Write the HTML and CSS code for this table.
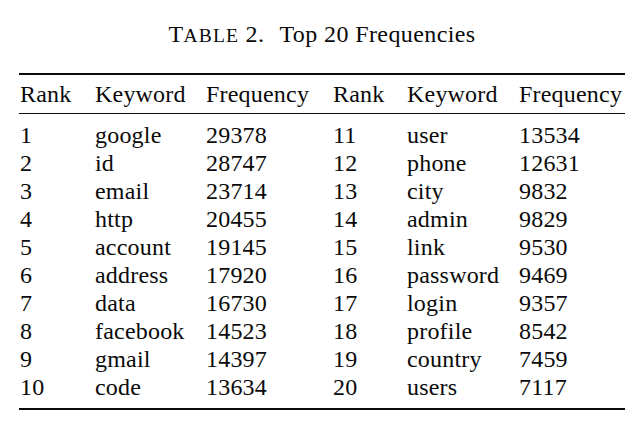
FILE: index.html
```html
<!DOCTYPE html>
<html lang="en">
<head>
<meta charset="utf-8">
<title>Table 2. Top 20 Frequencies</title>
<link rel="stylesheet" href="styles.css">
</head>
<body>
<div class="page">
  <div class="caption"><span class="label">T<span class="sc">ABLE</span> 2.</span>Top 20 Frequencies</div>
  <div class="table">
    <div class="head">
      <div class="row"><span>Rank</span><span>Keyword</span><span>Frequency</span><span>Rank</span><span>Keyword</span><span>Frequency</span></div>
    </div>
    <div class="body">
      <div class="row"><span>1</span><span>google</span><span>29378</span><span>11</span><span>user</span><span>13534</span></div>
      <div class="row"><span>2</span><span>id</span><span>28747</span><span>12</span><span>phone</span><span>12631</span></div>
      <div class="row"><span>3</span><span>email</span><span>23714</span><span>13</span><span>city</span><span>9832</span></div>
      <div class="row"><span>4</span><span>http</span><span>20455</span><span>14</span><span>admin</span><span>9829</span></div>
      <div class="row"><span>5</span><span>account</span><span>19145</span><span>15</span><span>link</span><span>9530</span></div>
      <div class="row"><span>6</span><span>address</span><span>17920</span><span>16</span><span>password</span><span>9469</span></div>
      <div class="row"><span>7</span><span>data</span><span>16730</span><span>17</span><span>login</span><span>9357</span></div>
      <div class="row"><span>8</span><span>facebook</span><span>14523</span><span>18</span><span>profile</span><span>8542</span></div>
      <div class="row"><span>9</span><span>gmail</span><span>14397</span><span>19</span><span>country</span><span>7459</span></div>
      <div class="row"><span>10</span><span>code</span><span>13634</span><span>20</span><span>users</span><span>7117</span></div>
    </div>
  </div>
</div>
</body>
</html>
```

FILE: styles.css
```css
html, body {
  margin: 0;
  padding: 0;
  background: #ffffff;
}

body {
  font-family: "Liberation Serif", "Times New Roman", serif;
  font-size: 24px;
  line-height: 28px;
  color: #0a0a0a;
}

.page {
  width: 640px;
  padding-top: 20px;
}

.caption {
  width: 644px;
  height: 28px;
  text-align: center;
  letter-spacing: 0.4px;
  white-space: nowrap;
}

.label {
  margin-right: 15px;
}

.sc {
  font-size: 19.5px;
  line-height: 1;
  letter-spacing: 1.2px;
}

.table {
  margin-top: 25px;
  margin-left: 19px;
  width: 606px;
  border-top: 2px solid #0a0a0a;
  border-bottom: 2px solid #0a0a0a;
}

.head {
  padding: 5px 0;
  border-bottom: 1px solid #0a0a0a;
}

.body {
  padding: 7px 0;
}

.row {
  display: grid;
  grid-template-columns: 75px 111px 127px 74px 112px 106px;
  padding-left: 1px;
  height: 28px;
  letter-spacing: 0.2px;
  white-space: nowrap;
}
```
